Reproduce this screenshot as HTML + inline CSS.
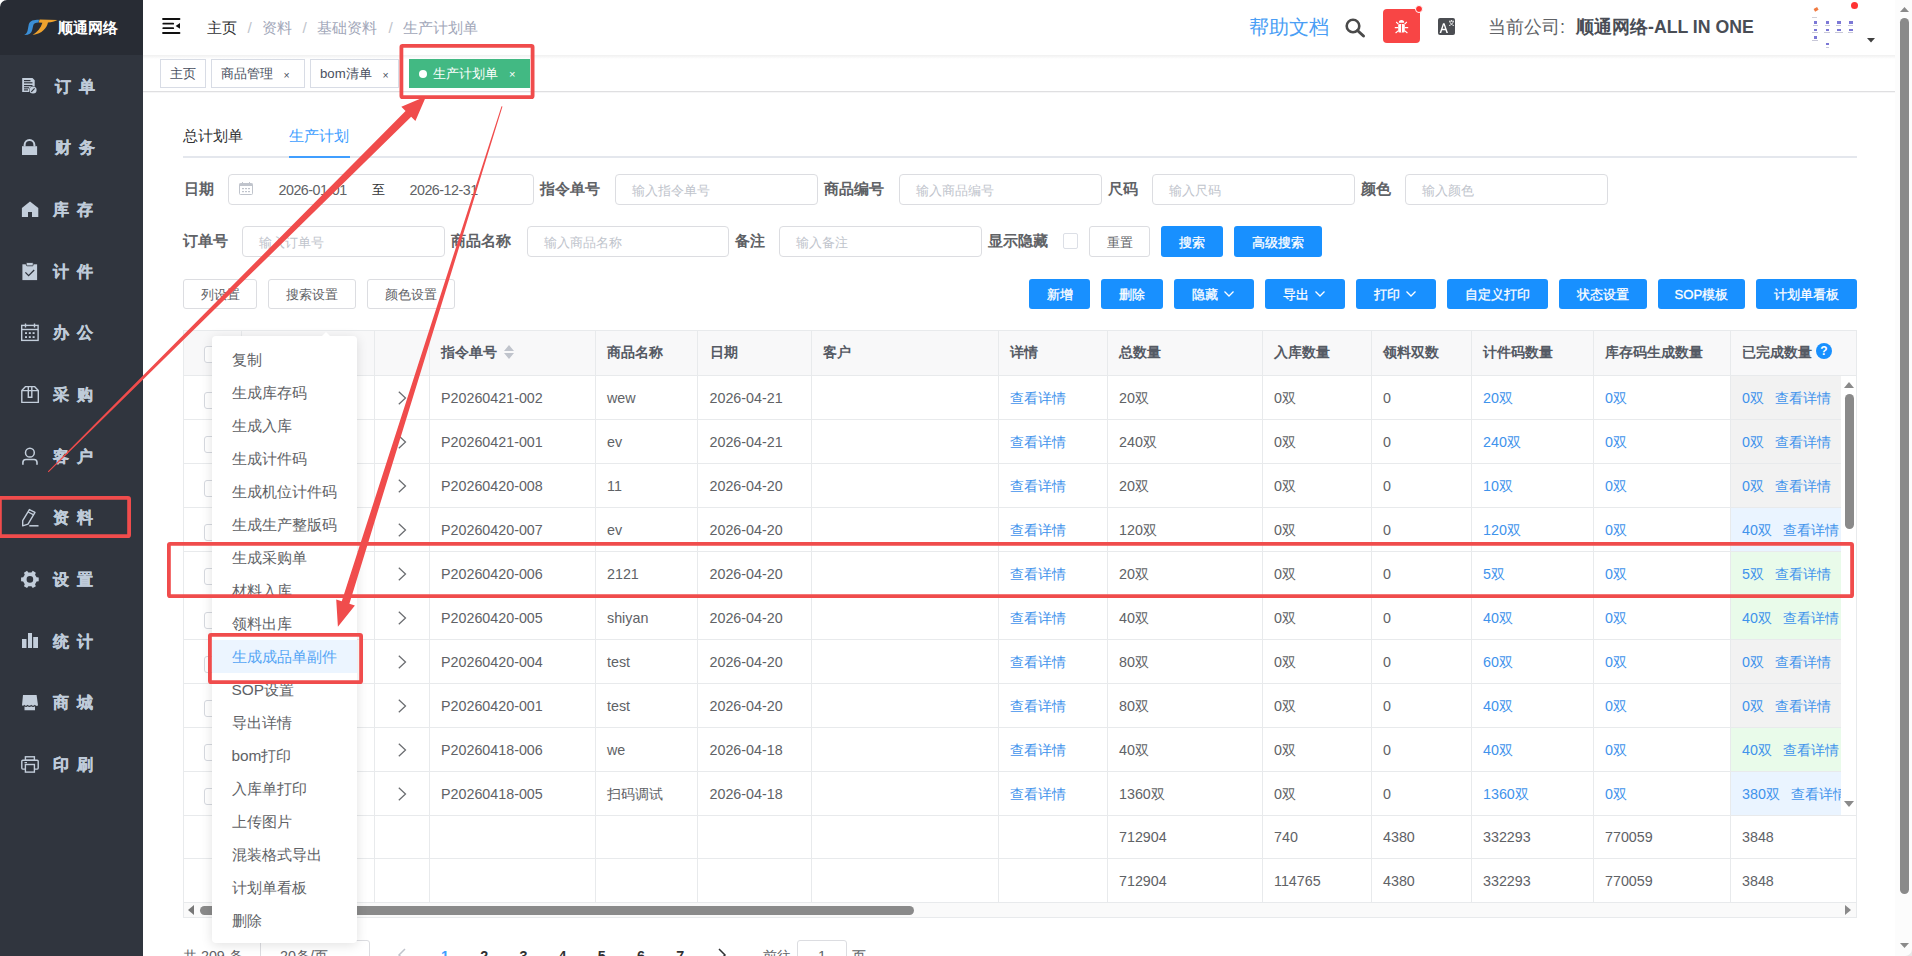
<!DOCTYPE html><html><head><meta charset="utf-8"><style>
*{margin:0;padding:0;box-sizing:border-box}
html,body{width:1912px;height:956px;overflow:hidden;background:#fff}
body{position:relative;font-family:"Liberation Sans",sans-serif;}
.t{position:absolute;white-space:nowrap}
.b{position:absolute}
svg{position:absolute;overflow:visible}
</style></head><body>
<div class="b" style="left:0px;top:0px;width:143px;height:956px;background:#30353e"></div>
<div class="b" style="left:0px;top:0px;width:143px;height:55px;background:#282c34"></div>
<svg style="left:0;top:0" width="143" height="55" viewBox="0 0 143 55">
<path d="M39 19.8 C33.5 19.8 30 20.5 28.8 24.2 L27.6 30.5 C27.1 32.8 26 34 24.2 35 C28.6 35.2 31.4 33.6 32.2 30 L33.3 25.2 C33.8 23.2 35.5 22.6 38.6 22.4 Z" fill="#3b8fd6"/>
<path d="M39.6 19.6 L57.5 20 C54.5 21.4 51.5 22.1 48 22.6 C46.5 28.5 42.5 33.5 32.6 35 C37.5 32 40.8 28 42.4 22.8 L38.7 22.5 Z" fill="#eea22e"/>
</svg>
<div class="t" style="left:58.3px;top:15.6px;font-size:15.3px;line-height:24px;color:#ffffff;font-weight:bold;">顺通网络</div>
<svg style="left:0;top:0" width="143" height="956" viewBox="0 0 143 956">
<path d="M22.2 78 H32.5 L34.7 80.2 V86.5 A4.3 4.3 0 0 0 29 91.9 H22.2 Z" fill="#c3cedb"/>
 <g fill="#30353e"><rect x="24" y="80" width="6.5" height="1.2"/><rect x="24" y="82.2" width="8.5" height="1.2"/><rect x="24" y="85" width="8.5" height="1.2"/><rect x="24" y="87.2" width="5" height="1.2"/><rect x="24" y="89.3" width="4" height="1.2"/></g>
 <circle cx="33" cy="90" r="3.6" fill="#c3cedb"/><path d="M31.3 91.8 L34.6 88.4" stroke="#30353e" stroke-width="1.2"/>
<rect x="22" y="146.2" width="15.1" height="8.8" fill="#c3cedb"/>
 <path d="M24.6 146.5 V145 A4.9 4.9 0 0 1 34.4 145 V146.5" fill="none" stroke="#c3cedb" stroke-width="2"/>
<path d="M21.9 208 L30 201.6 L38.3 208 V216.9 H32 V212 H28 V216.9 H21.9 Z" fill="#c3cedb"/>
<rect x="22.4" y="264.3" width="14.7" height="15.8" fill="#c3cedb"/>
 <rect x="26.3" y="262.5" width="6.9" height="3.3" rx="0.8" fill="#c3cedb" stroke="#30353e" stroke-width="0.8"/>
 <path d="M25.4 272.4 L28.6 275.6 L34.2 270" fill="none" stroke="#30353e" stroke-width="1.3"/>
<rect x="21.7" y="325.4" width="16.4" height="15" fill="none" stroke="#c3cedb" stroke-width="1.4"/>
 <path d="M21.7 329.5 H38.1" stroke="#c3cedb" stroke-width="1.4"/>
 <path d="M25.5 323.5 V327.5 M34.5 323.5 V327.5" stroke="#c3cedb" stroke-width="1.4"/>
 <g fill="#c3cedb"><rect x="25" y="332.2" width="2" height="1.8"/><rect x="28.8" y="332.2" width="2" height="1.8"/><rect x="32.6" y="332.2" width="2" height="1.8"/>
 <rect x="25" y="336.2" width="2" height="1.8"/><rect x="28.8" y="336.2" width="2" height="1.8"/><rect x="32.6" y="336.2" width="2" height="1.8"/></g>
<path d="M21.8 390.5 L25.6 386.6 H34.5 L38.3 390.5 V402.4 H21.8 Z M21.8 390.6 H38.3" fill="none" stroke="#c3cedb" stroke-width="1.4" stroke-linejoin="round"/>
 <path d="M28.3 386.6 V397.3 H31.8 V386.6" fill="none" stroke="#c3cedb" stroke-width="1.4"/>
<circle cx="29.9" cy="452.7" r="4.4" fill="none" stroke="#c3cedb" stroke-width="1.5"/>
 <path d="M22.9 464.8 V462.5 A3 3 0 0 1 25.9 459.5 H34 A3 3 0 0 1 37 462.5 V464.8" fill="none" stroke="#c3cedb" stroke-width="1.6"/>
<path d="M29.4 509.6 L35 512.4 L28 524.2 L22.7 525.8 L22.7 520.6 Z" fill="none" stroke="#c3cedb" stroke-width="1.4" stroke-linejoin="round"/>
 <path d="M28.2 512 L33.7 514.8" stroke="#c3cedb" stroke-width="1.3"/>
 <path d="M29.3 525.8 H38.5" stroke="#c3cedb" stroke-width="1.5"/>
<path d="M36.59 577.33 L38.72 577.61 L38.72 581.19 L36.59 581.47 L35.04 584.16 L35.86 586.14 L32.76 587.93 L31.45 586.23 L28.35 586.23 L27.04 587.93 L23.94 586.14 L24.76 584.16 L23.21 581.47 L21.08 581.19 L21.08 577.61 L23.21 577.33 L24.76 574.64 L23.94 572.66 L27.04 570.87 L28.35 572.57 L31.45 572.57 L32.76 570.87 L35.86 572.66 L35.04 574.64 Z M33.199999999999996 579.4 A3.3 3.3 0 1 0 26.599999999999998 579.4 A3.3 3.3 0 1 0 33.199999999999996 579.4 Z" fill="#c3cedb" fill-rule="evenodd"/>
<rect x="22" y="639" width="4.5" height="9" fill="#c3cedb"/><rect x="28" y="633" width="4" height="15" fill="#c3cedb"/><rect x="33.2" y="637" width="4.8" height="11" fill="#c3cedb"/>
<path d="M23 695 H36.6 L38 705.3 C37 706.8 35.5 705.5 34.8 704.8 C34 706 32 706 31.2 704.8 C30.4 706 28.4 706 27.6 704.8 C26.8 706 25 706 24.3 704.8 C23.5 706 22.4 705.8 22 705.3 Z" fill="#c3cedb"/>
 <path d="M24.5 706.5 C25.5 707.2 27 707.2 27.6 706.3 C28.5 707.2 30.5 707.2 31.2 706.3 C32 707.2 34 707.2 35 706.3 V710.2 H24.5 Z" fill="#c3cedb"/>
<rect x="21.8" y="760.3" width="16.4" height="8.8" rx="1" fill="none" stroke="#c3cedb" stroke-width="1.4"/>
 <rect x="25.4" y="756.8" width="9" height="3.5" fill="none" stroke="#c3cedb" stroke-width="1.4"/>
 <rect x="25.4" y="764.5" width="9" height="7.6" fill="#30353e" stroke="#c3cedb" stroke-width="1.4"/>
 <rect x="24.5" y="762" width="2.5" height="1.2" fill="#c3cedb"/>
</svg>
<div class="t" style="left:54.8px;top:73.8px;font-size:16px;line-height:25px;color:#bfcbd9;font-weight:bold;-webkit-text-stroke:0.3px #bfcbd9">订</div>
<div class="t" style="left:79.1px;top:73.8px;font-size:16px;line-height:25px;color:#bfcbd9;font-weight:bold;-webkit-text-stroke:0.3px #bfcbd9">单</div>
<div class="t" style="left:54.8px;top:135.4px;font-size:16px;line-height:25px;color:#bfcbd9;font-weight:bold;-webkit-text-stroke:0.3px #bfcbd9">财</div>
<div class="t" style="left:79.1px;top:135.4px;font-size:16px;line-height:25px;color:#bfcbd9;font-weight:bold;-webkit-text-stroke:0.3px #bfcbd9">务</div>
<div class="t" style="left:52.8px;top:197.1px;font-size:16px;line-height:25px;color:#bfcbd9;font-weight:bold;-webkit-text-stroke:0.3px #bfcbd9">库</div>
<div class="t" style="left:77.1px;top:197.1px;font-size:16px;line-height:25px;color:#bfcbd9;font-weight:bold;-webkit-text-stroke:0.3px #bfcbd9">存</div>
<div class="t" style="left:52.8px;top:258.8px;font-size:16px;line-height:25px;color:#bfcbd9;font-weight:bold;-webkit-text-stroke:0.3px #bfcbd9">计</div>
<div class="t" style="left:77.1px;top:258.8px;font-size:16px;line-height:25px;color:#bfcbd9;font-weight:bold;-webkit-text-stroke:0.3px #bfcbd9">件</div>
<div class="t" style="left:52.8px;top:320.4px;font-size:16px;line-height:25px;color:#bfcbd9;font-weight:bold;-webkit-text-stroke:0.3px #bfcbd9">办</div>
<div class="t" style="left:77.1px;top:320.4px;font-size:16px;line-height:25px;color:#bfcbd9;font-weight:bold;-webkit-text-stroke:0.3px #bfcbd9">公</div>
<div class="t" style="left:52.8px;top:382.1px;font-size:16px;line-height:25px;color:#bfcbd9;font-weight:bold;-webkit-text-stroke:0.3px #bfcbd9">采</div>
<div class="t" style="left:77.1px;top:382.1px;font-size:16px;line-height:25px;color:#bfcbd9;font-weight:bold;-webkit-text-stroke:0.3px #bfcbd9">购</div>
<div class="t" style="left:52.8px;top:443.7px;font-size:16px;line-height:25px;color:#bfcbd9;font-weight:bold;-webkit-text-stroke:0.3px #bfcbd9">客</div>
<div class="t" style="left:77.1px;top:443.7px;font-size:16px;line-height:25px;color:#bfcbd9;font-weight:bold;-webkit-text-stroke:0.3px #bfcbd9">户</div>
<div class="t" style="left:52.8px;top:505.4px;font-size:16px;line-height:25px;color:#bfcbd9;font-weight:bold;-webkit-text-stroke:0.3px #bfcbd9">资</div>
<div class="t" style="left:77.1px;top:505.4px;font-size:16px;line-height:25px;color:#bfcbd9;font-weight:bold;-webkit-text-stroke:0.3px #bfcbd9">料</div>
<div class="t" style="left:52.8px;top:567.0px;font-size:16px;line-height:25px;color:#bfcbd9;font-weight:bold;-webkit-text-stroke:0.3px #bfcbd9">设</div>
<div class="t" style="left:77.1px;top:567.0px;font-size:16px;line-height:25px;color:#bfcbd9;font-weight:bold;-webkit-text-stroke:0.3px #bfcbd9">置</div>
<div class="t" style="left:52.8px;top:628.6px;font-size:16px;line-height:25px;color:#bfcbd9;font-weight:bold;-webkit-text-stroke:0.3px #bfcbd9">统</div>
<div class="t" style="left:77.1px;top:628.6px;font-size:16px;line-height:25px;color:#bfcbd9;font-weight:bold;-webkit-text-stroke:0.3px #bfcbd9">计</div>
<div class="t" style="left:52.8px;top:690.3px;font-size:16px;line-height:25px;color:#bfcbd9;font-weight:bold;-webkit-text-stroke:0.3px #bfcbd9">商</div>
<div class="t" style="left:77.1px;top:690.3px;font-size:16px;line-height:25px;color:#bfcbd9;font-weight:bold;-webkit-text-stroke:0.3px #bfcbd9">城</div>
<div class="t" style="left:52.8px;top:751.9px;font-size:16px;line-height:25px;color:#bfcbd9;font-weight:bold;-webkit-text-stroke:0.3px #bfcbd9">印</div>
<div class="t" style="left:77.1px;top:751.9px;font-size:16px;line-height:25px;color:#bfcbd9;font-weight:bold;-webkit-text-stroke:0.3px #bfcbd9">刷</div>
<div class="b" style="left:143px;top:54.5px;width:1752px;height:4.5px;background:linear-gradient(#f0f0f0,#f6f6f6 40%,#fff)"></div>
<svg style="left:0;top:0" width="200" height="50" viewBox="0 0 200 50">
<g stroke="#111" stroke-width="1.8" stroke-linecap="round">
<path d="M163 19 H179.5"/><path d="M163.3 23.7 H173.2"/><path d="M163.3 28.2 H173.2"/><path d="M163 33 H179.5"/>
</g>
<path d="M180 23 L175.6 25.9 L180 28.8 Z" fill="#111"/>
</svg>
<div class="t" style="left:207px;top:15.5px;font-size:15.4px;line-height:24px;color:#303133;font-weight:normal;">主页</div>
<div class="t" style="left:247.5px;top:15.5px;font-size:15.4px;line-height:24px;color:#c0c4cc;font-weight:normal;">/</div>
<div class="t" style="left:262px;top:15.5px;font-size:15.4px;line-height:24px;color:#a2a7b9;font-weight:normal;">资料</div>
<div class="t" style="left:302.5px;top:15.5px;font-size:15.4px;line-height:24px;color:#c0c4cc;font-weight:normal;">/</div>
<div class="t" style="left:317px;top:15.5px;font-size:15.4px;line-height:24px;color:#a2a7b9;font-weight:normal;">基础资料</div>
<div class="t" style="left:388.5px;top:15.5px;font-size:15.4px;line-height:24px;color:#c0c4cc;font-weight:normal;">/</div>
<div class="t" style="left:403px;top:15.5px;font-size:15.4px;line-height:24px;color:#a2a7b9;font-weight:normal;">生产计划单</div>
<div class="t" style="left:1249px;top:11.5px;font-size:19.5px;line-height:31px;color:#4a9ef5;font-weight:normal;">帮助文档</div>
<svg style="left:1345px;top:18px" width="20" height="19" viewBox="0 0 20 19">
<circle cx="8" cy="8" r="6.3" fill="none" stroke="#4a4a4a" stroke-width="2.6"/>
<path d="M12.5 12.5 L18.5 18" stroke="#4a4a4a" stroke-width="3" stroke-linecap="round"/>
</svg>
<div class="b" style="left:1383px;top:9px;width:37px;height:34px;background:#f84545;border-radius:4px"></div>
<svg style="left:1394px;top:19px" width="15" height="15" viewBox="0 0 15 15">
<path d="M4.8 3.8 A2.7 2.7 0 0 1 10.2 3.8 Z" fill="#fff"/>
<rect x="4.2" y="5" width="6.6" height="8.6" rx="1.5" fill="#fff"/>
<path d="M7.5 5.2 V13.6" stroke="#f84545" stroke-width="0.9"/>
<path d="M2.2 3 L4.6 5.4 M12.8 3 L10.4 5.4 M0.8 8.6 H4.3 M14.2 8.6 H10.7 M1.6 14 L4.4 11.6 M13.4 14 L10.6 11.6" stroke="#fff" stroke-width="1.1"/>
</svg>
<div class="b" style="left:1415px;top:5.3px;width:8px;height:8px;border-radius:50%;background:#f33;border:1px solid #fff"></div>
<div class="b" style="left:1438px;top:18px;width:17px;height:17px;background:#4b4d52;border-radius:2px"></div>
<svg style="left:1438px;top:18px" width="17" height="17" viewBox="0 0 17 17">
<path d="M1.6 15 L5 5.2 H6.6 L10 15 H8.4 L7.5 12.3 H4.1 L3.2 15 Z M4.6 10.8 H7 L5.8 7 Z" fill="#fff"/>
<path d="M11 3.2 H16 M13.5 2 V3.2 M11.6 3.4 C12.3 5.5 13.8 7 16 7.6 M15.4 3.4 C14.8 5.5 13.2 7 11 7.6" fill="none" stroke="#fff" stroke-width="0.8"/>
</svg>
<div class="t" style="left:1488px;top:12.5px;font-size:18px;line-height:28px;color:#606266;font-weight:normal;">当前公司:</div>
<div class="t" style="left:1576px;top:12.5px;font-size:17.7px;line-height:28px;color:#494d55;font-weight:bold;">顺通网络-ALL IN ONE</div>
<div class="b" style="left:1813.5px;top:21px;width:3.5px;height:3px;background:#6560cf;opacity:0.85"></div>
<div class="b" style="left:1825.5px;top:21px;width:3.5px;height:3px;background:#6560cf;opacity:0.85"></div>
<div class="b" style="left:1837px;top:21px;width:3.5px;height:3px;background:#6560cf;opacity:0.85"></div>
<div class="b" style="left:1849px;top:21px;width:3.5px;height:3px;background:#6560cf;opacity:0.85"></div>
<div class="b" style="left:1813.5px;top:28.5px;width:3.5px;height:2.5px;background:#6560cf;opacity:0.85"></div>
<div class="b" style="left:1825.5px;top:28.5px;width:3.5px;height:2.5px;background:#6560cf;opacity:0.85"></div>
<div class="b" style="left:1837px;top:28.5px;width:3.5px;height:2.5px;background:#6560cf;opacity:0.85"></div>
<div class="b" style="left:1849px;top:28.5px;width:3.5px;height:2.5px;background:#6560cf;opacity:0.85"></div>
<div class="b" style="left:1813.5px;top:36px;width:3.5px;height:3px;background:#6560cf;opacity:0.85"></div>
<div class="b" style="left:1825.7px;top:43px;width:3.0px;height:2px;background:#6560cf;opacity:0.85"></div>
<div class="b" style="left:1812.5px;top:25px;width:5.0px;height:0.8000000000000007px;background:#c8c8d8"></div>
<div class="b" style="left:1824.5px;top:25px;width:5.0px;height:0.8000000000000007px;background:#c8c8d8"></div>
<div class="b" style="left:1836px;top:25px;width:5px;height:0.8000000000000007px;background:#c8c8d8"></div>
<div class="b" style="left:1848px;top:25px;width:5px;height:0.8000000000000007px;background:#c8c8d8"></div>
<div class="b" style="left:1812px;top:32px;width:6px;height:0.7999999999999972px;background:#c8c8d8"></div>
<div class="b" style="left:1824px;top:32px;width:6px;height:0.7999999999999972px;background:#c8c8d8"></div>
<div class="b" style="left:1835px;top:32px;width:8px;height:0.7999999999999972px;background:#c8c8d8"></div>
<div class="b" style="left:1848px;top:32px;width:5px;height:0.7999999999999972px;background:#c8c8d8"></div>
<div class="b" style="left:1812px;top:39.5px;width:6px;height:0.7999999999999972px;background:#c8c8d8"></div>
<div class="b" style="left:1825.5px;top:46.5px;width:3.0px;height:0.7999999999999972px;background:#c8c8d8"></div>
<div class="b" style="left:1814px;top:8px;width:3.5px;height:2.5px;background:#f07a40;transform:rotate(-30deg)"></div>
<div class="b" style="left:1811.5px;top:17px;width:5.5px;height:1px;background:#d0d0d8"></div>
<div class="b" style="left:1850.8px;top:1.8px;width:7px;height:7px;border-radius:50%;background:#f33"></div>
<svg style="left:1866.5px;top:37.5px" width="8" height="4.5" viewBox="0 0 8 4.5"><path d="M0 0 H8 L4 4.5 Z" fill="#404040"/></svg>
<div class="b" style="left:1895px;top:0px;width:17px;height:956px;background:#fcfcfc"></div>
<div class="b" style="left:1900px;top:18px;width:9px;height:876px;background:#8a8a8a;border-radius:5px"></div>
<svg style="left:1900px;top:7px" width="9" height="5" viewBox="0 0 9 5"><path d="M0 5 H9 L4.5 0 Z" fill="#8a8a8a"/></svg>
<svg style="left:1900px;top:943px" width="9" height="5" viewBox="0 0 9 5"><path d="M0 0 H9 L4.5 5 Z" fill="#8a8a8a"/></svg>
<div class="b" style="left:143px;top:91px;width:1752px;height:1px;background:#dfdfe1"></div>
<div class="b" style="left:143px;top:92px;width:1752px;height:1px;background:#f6f6f7"></div>
<div class="b" style="left:160px;top:59px;width:46px;height:29px;border:1px solid #d8dce5;background:#fff"></div>
<div class="t" style="left:170px;top:63.0px;font-size:13.2px;line-height:21px;color:#495060;font-weight:normal;">主页</div>
<div class="b" style="left:211px;top:59px;width:94px;height:29px;border:1px solid #d8dce5;background:#fff"></div>
<div class="t" style="left:221px;top:63.0px;font-size:13.2px;line-height:21px;color:#495060;font-weight:normal;">商品管理</div>
<div class="t" style="left:283.5px;top:66.5px;font-size:10.5px;line-height:16px;color:#495060;font-weight:normal;">×</div>
<div class="b" style="left:310px;top:59px;width:89px;height:29px;border:1px solid #d8dce5;background:#fff"></div>
<div class="t" style="left:320px;top:63.0px;font-size:13.2px;line-height:21px;color:#495060;font-weight:normal;">bom清单</div>
<div class="t" style="left:382.5px;top:66.5px;font-size:10.5px;line-height:16px;color:#495060;font-weight:normal;">×</div>
<div class="b" style="left:409px;top:59px;width:121px;height:29px;background:#42b983"></div>
<div class="b" style="left:419px;top:70px;width:8px;height:8px;border-radius:50%;background:#fff"></div>
<div class="t" style="left:433px;top:63.0px;font-size:13.2px;line-height:21px;color:#fff;font-weight:normal;">生产计划单</div>
<div class="t" style="left:509px;top:66.0px;font-size:11px;line-height:17px;color:#fff;font-weight:normal;">×</div>
<div class="t" style="left:183px;top:123.5px;font-size:15.4px;line-height:24px;color:#303133;font-weight:normal;">总计划单</div>
<div class="t" style="left:289px;top:123.5px;font-size:15.4px;line-height:24px;color:#409eff;font-weight:normal;">生产计划</div>
<div class="b" style="left:183px;top:156px;width:1674px;height:2px;background:#e4e7ed"></div>
<div class="b" style="left:289px;top:156px;width:61px;height:2px;background:#409eff"></div>
<div class="t" style="left:183.5px;top:176.5px;font-size:15.4px;line-height:24px;color:#606266;font-weight:bold;">日期</div>
<div class="b" style="left:228px;top:174px;width:306px;height:31px;border:1px solid #dcdde1;border-radius:4px;background:#fff"></div>
<svg style="left:239px;top:182px" width="14" height="13" viewBox="0 0 14 13">
<rect x="0.5" y="1.5" width="13" height="11" rx="1" fill="none" stroke="#c0c4cc" stroke-width="1"/>
<rect x="0.5" y="1.5" width="13" height="2.5" fill="#c0c4cc"/>
<rect x="3" y="0" width="1" height="2" fill="#c0c4cc"/><rect x="10" y="0" width="1" height="2" fill="#c0c4cc"/>
<g fill="#c0c4cc"><rect x="3" y="6" width="2" height="1.2"/><rect x="6" y="6" width="2" height="1.2"/><rect x="9" y="6" width="2" height="1.2"/>
<rect x="3" y="9" width="2" height="1.2"/><rect x="6" y="9" width="2" height="1.2"/><rect x="9" y="9" width="2" height="1.2"/></g>
</svg>
<div class="t" style="left:278.5px;top:179.0px;font-size:14.3px;line-height:22px;color:#606266;font-weight:normal;letter-spacing:-0.5px">2026-01-01</div>
<div class="t" style="left:371.5px;top:178.5px;font-size:13.2px;line-height:21px;color:#303133;font-weight:normal;">至</div>
<div class="t" style="left:409.5px;top:179.0px;font-size:14.3px;line-height:22px;color:#606266;font-weight:normal;letter-spacing:-0.5px">2026-12-31</div>
<div class="t" style="left:540px;top:176.5px;font-size:15.4px;line-height:24px;color:#606266;font-weight:bold;">指令单号</div>
<div class="b" style="left:615px;top:174px;width:203px;height:31px;border:1px solid #dcdde1;border-radius:4px;background:#fff"></div>
<div class="t" style="left:632px;top:179.5px;font-size:13.2px;line-height:21px;color:#c0c4cc;font-weight:normal;">输入指令单号</div>
<div class="t" style="left:824px;top:176.5px;font-size:15.4px;line-height:24px;color:#606266;font-weight:bold;">商品编号</div>
<div class="b" style="left:899px;top:174px;width:203px;height:31px;border:1px solid #dcdde1;border-radius:4px;background:#fff"></div>
<div class="t" style="left:916px;top:179.5px;font-size:13.2px;line-height:21px;color:#c0c4cc;font-weight:normal;">输入商品编号</div>
<div class="t" style="left:1108px;top:176.5px;font-size:15.4px;line-height:24px;color:#606266;font-weight:bold;">尺码</div>
<div class="b" style="left:1152px;top:174px;width:203px;height:31px;border:1px solid #dcdde1;border-radius:4px;background:#fff"></div>
<div class="t" style="left:1169px;top:179.5px;font-size:13.2px;line-height:21px;color:#c0c4cc;font-weight:normal;">输入尺码</div>
<div class="t" style="left:1361px;top:176.5px;font-size:15.4px;line-height:24px;color:#606266;font-weight:bold;">颜色</div>
<div class="b" style="left:1405px;top:174px;width:203px;height:31px;border:1px solid #dcdde1;border-radius:4px;background:#fff"></div>
<div class="t" style="left:1422px;top:179.5px;font-size:13.2px;line-height:21px;color:#c0c4cc;font-weight:normal;">输入颜色</div>
<div class="t" style="left:183px;top:228.5px;font-size:15.4px;line-height:24px;color:#606266;font-weight:bold;">订单号</div>
<div class="b" style="left:242px;top:226px;width:203px;height:31px;border:1px solid #dcdde1;border-radius:4px;background:#fff"></div>
<div class="t" style="left:259px;top:231.5px;font-size:13.2px;line-height:21px;color:#c0c4cc;font-weight:normal;">输入订单号</div>
<div class="t" style="left:451px;top:228.5px;font-size:15.4px;line-height:24px;color:#606266;font-weight:bold;">商品名称</div>
<div class="b" style="left:527px;top:226px;width:202px;height:31px;border:1px solid #dcdde1;border-radius:4px;background:#fff"></div>
<div class="t" style="left:544px;top:231.5px;font-size:13.2px;line-height:21px;color:#c0c4cc;font-weight:normal;">输入商品名称</div>
<div class="t" style="left:735px;top:228.5px;font-size:15.4px;line-height:24px;color:#606266;font-weight:bold;">备注</div>
<div class="b" style="left:779px;top:226px;width:203px;height:31px;border:1px solid #dcdde1;border-radius:4px;background:#fff"></div>
<div class="t" style="left:796px;top:231.5px;font-size:13.2px;line-height:21px;color:#c0c4cc;font-weight:normal;">输入备注</div>
<div class="t" style="left:988px;top:228.5px;font-size:15.4px;line-height:24px;color:#606266;font-weight:bold;">显示隐藏</div>
<div class="b" style="left:1063px;top:233px;width:15px;height:16px;border:1px solid #dcdfe6;border-radius:2px;background:#fff"></div>
<div class="b" style="left:1089px;top:226px;width:61px;height:31px;border:1px solid #dcdde1;border-radius:3px;background:#fff"></div>
<div class="t" style="left:1089px;top:226.8px;width:61px;height:31px;line-height:31px;text-align:center;font-size:13.2px;color:#606266;">重置</div>
<div class="b" style="left:1161px;top:226px;width:62px;height:31px;background:#1890ff;border-radius:3px"></div>
<div class="t" style="left:1161px;top:226.8px;width:62px;height:31px;line-height:31px;text-align:center;font-size:13.2px;color:#fff;-webkit-text-stroke:0.3px #fff">搜索</div>
<div class="b" style="left:1234px;top:226px;width:88px;height:31px;background:#1890ff;border-radius:3px"></div>
<div class="t" style="left:1234px;top:226.8px;width:88px;height:31px;line-height:31px;text-align:center;font-size:13.2px;color:#fff;-webkit-text-stroke:0.3px #fff">高级搜索</div>
<div class="b" style="left:183px;top:279px;width:74px;height:30px;border:1px solid #dcdde1;border-radius:3px;background:#fff"></div>
<div class="t" style="left:183px;top:279.8px;width:74px;height:30px;line-height:30px;text-align:center;font-size:13.2px;color:#606266;">列设置</div>
<div class="b" style="left:268px;top:279px;width:88px;height:30px;border:1px solid #dcdde1;border-radius:3px;background:#fff"></div>
<div class="t" style="left:268px;top:279.8px;width:88px;height:30px;line-height:30px;text-align:center;font-size:13.2px;color:#606266;">搜索设置</div>
<div class="b" style="left:367px;top:279px;width:88px;height:30px;border:1px solid #dcdde1;border-radius:3px;background:#fff"></div>
<div class="t" style="left:367px;top:279.8px;width:88px;height:30px;line-height:30px;text-align:center;font-size:13.2px;color:#606266;">颜色设置</div>
<div class="b" style="left:1029px;top:279px;width:61px;height:30px;background:#1890ff;border-radius:3px"></div>
<div class="t" style="left:1029px;top:279.8px;width:61px;height:30px;line-height:30px;text-align:center;font-size:13.2px;color:#fff;-webkit-text-stroke:0.3px #fff">新增</div>
<div class="b" style="left:1101px;top:279px;width:62px;height:30px;background:#1890ff;border-radius:3px"></div>
<div class="t" style="left:1101px;top:279.8px;width:62px;height:30px;line-height:30px;text-align:center;font-size:13.2px;color:#fff;-webkit-text-stroke:0.3px #fff">删除</div>
<div class="b" style="left:1174px;top:279px;width:80px;height:30px;background:#1890ff;border-radius:3px"></div>
<div class="t" style="left:1174px;top:279.8px;width:80px;height:30px;line-height:30px;text-align:center;font-size:13.2px;color:#fff;-webkit-text-stroke:0.3px #fff">隐藏<span style="display:inline-block;width:18px"></span></div>
<svg style="left:1224px;top:291px" width="10" height="6" viewBox="0 0 10 6"><path d="M0.5 0.5 L5 5 L9.5 0.5" fill="none" stroke="#fff" stroke-width="1.3"/></svg>
<div class="b" style="left:1265px;top:279px;width:80px;height:30px;background:#1890ff;border-radius:3px"></div>
<div class="t" style="left:1265px;top:279.8px;width:80px;height:30px;line-height:30px;text-align:center;font-size:13.2px;color:#fff;-webkit-text-stroke:0.3px #fff">导出<span style="display:inline-block;width:18px"></span></div>
<svg style="left:1315px;top:291px" width="10" height="6" viewBox="0 0 10 6"><path d="M0.5 0.5 L5 5 L9.5 0.5" fill="none" stroke="#fff" stroke-width="1.3"/></svg>
<div class="b" style="left:1356px;top:279px;width:80px;height:30px;background:#1890ff;border-radius:3px"></div>
<div class="t" style="left:1356px;top:279.8px;width:80px;height:30px;line-height:30px;text-align:center;font-size:13.2px;color:#fff;-webkit-text-stroke:0.3px #fff">打印<span style="display:inline-block;width:18px"></span></div>
<svg style="left:1406px;top:291px" width="10" height="6" viewBox="0 0 10 6"><path d="M0.5 0.5 L5 5 L9.5 0.5" fill="none" stroke="#fff" stroke-width="1.3"/></svg>
<div class="b" style="left:1447px;top:279px;width:101px;height:30px;background:#1890ff;border-radius:3px"></div>
<div class="t" style="left:1447px;top:279.8px;width:101px;height:30px;line-height:30px;text-align:center;font-size:13.2px;color:#fff;-webkit-text-stroke:0.3px #fff">自定义打印</div>
<div class="b" style="left:1559px;top:279px;width:88px;height:30px;background:#1890ff;border-radius:3px"></div>
<div class="t" style="left:1559px;top:279.8px;width:88px;height:30px;line-height:30px;text-align:center;font-size:13.2px;color:#fff;-webkit-text-stroke:0.3px #fff">状态设置</div>
<div class="b" style="left:1658px;top:279px;width:87px;height:30px;background:#1890ff;border-radius:3px"></div>
<div class="t" style="left:1658px;top:279.8px;width:87px;height:30px;line-height:30px;text-align:center;font-size:13.2px;color:#fff;-webkit-text-stroke:0.3px #fff">SOP模板</div>
<div class="b" style="left:1756px;top:279px;width:101px;height:30px;background:#1890ff;border-radius:3px"></div>
<div class="t" style="left:1756px;top:279.8px;width:101px;height:30px;line-height:30px;text-align:center;font-size:13.2px;color:#fff;-webkit-text-stroke:0.3px #fff">计划单看板</div>
<div class="b" style="left:183px;top:330px;width:1673px;height:45px;background:#f8f8f9"></div>
<div class="b" style="left:1731px;top:375px;width:110px;height:44px;background:#f2f2f2"></div>
<div class="b" style="left:1731px;top:419px;width:110px;height:44px;background:#f2f2f2"></div>
<div class="b" style="left:1731px;top:463px;width:110px;height:44px;background:#f2f2f2"></div>
<div class="b" style="left:1731px;top:507px;width:110px;height:44px;background:#eaf4ff"></div>
<div class="b" style="left:1731px;top:551px;width:110px;height:44px;background:#e9fbea"></div>
<div class="b" style="left:1731px;top:595px;width:110px;height:44px;background:#e9fbea"></div>
<div class="b" style="left:1731px;top:639px;width:110px;height:44px;background:#f2f2f2"></div>
<div class="b" style="left:1731px;top:683px;width:110px;height:44px;background:#f2f2f2"></div>
<div class="b" style="left:1731px;top:727px;width:110px;height:44px;background:#e9fbea"></div>
<div class="b" style="left:1731px;top:771px;width:110px;height:44px;background:#eaf4ff"></div>
<div class="b" style="left:183px;top:330px;width:1673px;height:1px;background:#e8eaec"></div>
<div class="b" style="left:183px;top:375px;width:1673px;height:1px;background:#e8eaec"></div>
<div class="b" style="left:183px;top:419px;width:1673px;height:1px;background:#e8eaec"></div>
<div class="b" style="left:183px;top:463px;width:1673px;height:1px;background:#e8eaec"></div>
<div class="b" style="left:183px;top:507px;width:1673px;height:1px;background:#e8eaec"></div>
<div class="b" style="left:183px;top:551px;width:1673px;height:1px;background:#e8eaec"></div>
<div class="b" style="left:183px;top:595px;width:1673px;height:1px;background:#e8eaec"></div>
<div class="b" style="left:183px;top:639px;width:1673px;height:1px;background:#e8eaec"></div>
<div class="b" style="left:183px;top:683px;width:1673px;height:1px;background:#e8eaec"></div>
<div class="b" style="left:183px;top:727px;width:1673px;height:1px;background:#e8eaec"></div>
<div class="b" style="left:183px;top:771px;width:1673px;height:1px;background:#e8eaec"></div>
<div class="b" style="left:183px;top:815px;width:1673px;height:1px;background:#e8eaec"></div>
<div class="b" style="left:183px;top:858px;width:1673px;height:1px;background:#e8eaec"></div>
<div class="b" style="left:183px;top:902px;width:1673px;height:1px;background:#e8eaec"></div>
<div class="b" style="left:183px;top:917px;width:1673px;height:1px;background:#e8eaec"></div>
<div class="b" style="left:183px;top:330px;width:1px;height:572px;background:#e8eaec"></div>
<div class="b" style="left:241px;top:330px;width:1px;height:572px;background:#e8eaec"></div>
<div class="b" style="left:374px;top:330px;width:1px;height:572px;background:#e8eaec"></div>
<div class="b" style="left:429px;top:330px;width:1px;height:572px;background:#e8eaec"></div>
<div class="b" style="left:595px;top:330px;width:1px;height:572px;background:#e8eaec"></div>
<div class="b" style="left:697px;top:330px;width:1px;height:572px;background:#e8eaec"></div>
<div class="b" style="left:811px;top:330px;width:1px;height:572px;background:#e8eaec"></div>
<div class="b" style="left:998px;top:330px;width:1px;height:572px;background:#e8eaec"></div>
<div class="b" style="left:1107px;top:330px;width:1px;height:572px;background:#e8eaec"></div>
<div class="b" style="left:1262px;top:330px;width:1px;height:572px;background:#e8eaec"></div>
<div class="b" style="left:1371px;top:330px;width:1px;height:572px;background:#e8eaec"></div>
<div class="b" style="left:1471px;top:330px;width:1px;height:572px;background:#e8eaec"></div>
<div class="b" style="left:1593px;top:330px;width:1px;height:572px;background:#e8eaec"></div>
<div class="b" style="left:1730px;top:330px;width:1px;height:572px;background:#e8eaec"></div>
<div class="b" style="left:1856px;top:330px;width:1px;height:572px;background:#e8eaec"></div>
<div class="b" style="left:183px;top:902px;width:1px;height:16px;background:#e8eaec"></div>
<div class="b" style="left:1856px;top:902px;width:1px;height:16px;background:#e8eaec"></div>
<div class="b" style="left:1841px;top:376px;width:15px;height:439px;background:#fff"></div>
<svg style="left:1844px;top:382px" width="10" height="6" viewBox="0 0 10 6"><path d="M0 6 H10 L5 0 Z" fill="#8a8a8a"/></svg>
<div class="b" style="left:1845px;top:394px;width:9px;height:135px;background:#8a8a8a;border-radius:5px"></div>
<svg style="left:1844px;top:801px" width="10" height="6" viewBox="0 0 10 6"><path d="M0 0 H10 L5 6 Z" fill="#8a8a8a"/></svg>
<div class="b" style="left:184px;top:903px;width:1672px;height:14px;background:#fafafa"></div>
<svg style="left:188px;top:905px" width="6" height="10" viewBox="0 0 6 10"><path d="M6 0 V10 L0 5 Z" fill="#777"/></svg>
<div class="b" style="left:200px;top:906px;width:714px;height:9px;background:#8a8a8a;border-radius:5px"></div>
<svg style="left:1845px;top:905px" width="6" height="10" viewBox="0 0 6 10"><path d="M0 0 V10 L6 5 Z" fill="#8a8a8a"/></svg>
<div class="t" style="left:441px;top:340.6px;font-size:14.3px;line-height:22px;color:#555a64;font-weight:bold;">指令单号</div>
<div class="t" style="left:607px;top:340.6px;font-size:14.3px;line-height:22px;color:#555a64;font-weight:bold;">商品名称</div>
<div class="t" style="left:709.5px;top:340.6px;font-size:14.3px;line-height:22px;color:#555a64;font-weight:bold;">日期</div>
<div class="t" style="left:823px;top:340.6px;font-size:14.3px;line-height:22px;color:#555a64;font-weight:bold;">客户</div>
<div class="t" style="left:1010px;top:340.6px;font-size:14.3px;line-height:22px;color:#555a64;font-weight:bold;">详情</div>
<div class="t" style="left:1119px;top:340.6px;font-size:14.3px;line-height:22px;color:#555a64;font-weight:bold;">总数量</div>
<div class="t" style="left:1274px;top:340.6px;font-size:14.3px;line-height:22px;color:#555a64;font-weight:bold;">入库数量</div>
<div class="t" style="left:1383px;top:340.6px;font-size:14.3px;line-height:22px;color:#555a64;font-weight:bold;">领料双数</div>
<div class="t" style="left:1483px;top:340.6px;font-size:14.3px;line-height:22px;color:#555a64;font-weight:bold;">计件码数量</div>
<div class="t" style="left:1605px;top:340.6px;font-size:14.3px;line-height:22px;color:#555a64;font-weight:bold;">库存码生成数量</div>
<div class="t" style="left:1742px;top:340.6px;font-size:14.3px;line-height:22px;color:#555a64;font-weight:bold;">已完成数量</div>
<svg style="left:504px;top:345px" width="10" height="14" viewBox="0 0 10 14"><path d="M0 6 L5 0 L10 6 Z M0 8 L5 14 L10 8 Z" fill="#c0c4cc"/></svg>
<div class="b" style="left:1816px;top:343px;width:16px;height:16px;border-radius:50%;background:#1890ff;color:#fff;font-size:12px;line-height:16px;text-align:center;font-weight:bold">?</div>
<div class="b" style="left:203.5px;top:346px;width:17.0px;height:17px;border:1.3px solid #d6d9df;border-radius:3px;background:#fff"></div>
<div class="b" style="left:203.5px;top:391.5px;width:17.0px;height:17.0px;border:1.3px solid #d6d9df;border-radius:3px;background:#fff"></div>
<svg style="left:398px;top:391.0px" width="9" height="14" viewBox="0 0 9 14"><path d="M0.8 0.8 L7.5 7 L0.8 13.2" fill="none" stroke="#6a6c70" stroke-width="1.25"/></svg>
<div class="t" style="left:441px;top:386.5px;font-size:14.3px;line-height:22px;color:#606266;font-weight:normal;">P20260421-002</div>
<div class="t" style="left:607px;top:386.5px;font-size:14.3px;line-height:22px;color:#606266;font-weight:normal;">wew</div>
<div class="t" style="left:709.5px;top:386.5px;font-size:14.3px;line-height:22px;color:#606266;font-weight:normal;">2026-04-21</div>
<div class="t" style="left:1010px;top:386.5px;font-size:14.3px;line-height:22px;color:#3f93ec;font-weight:normal;">查看详情</div>
<div class="t" style="left:1119px;top:386.5px;font-size:14.3px;line-height:22px;color:#606266;font-weight:normal;">20双</div>
<div class="t" style="left:1274px;top:386.5px;font-size:14.3px;line-height:22px;color:#606266;font-weight:normal;">0双</div>
<div class="t" style="left:1383px;top:386.5px;font-size:14.3px;line-height:22px;color:#606266;font-weight:normal;">0</div>
<div class="t" style="left:1483px;top:386.5px;font-size:14.3px;line-height:22px;color:#3f93ec;font-weight:normal;">20双</div>
<div class="t" style="left:1605px;top:386.5px;font-size:14.3px;line-height:22px;color:#3f93ec;font-weight:normal;">0双</div>
<div class="t" style="left:1742px;top:386.5px;width:99px;overflow:hidden;font-size:14.3px;line-height:22px;color:#3f93ec">0双<span style="margin-left:11.5px">查看详情</span></div>
<div class="b" style="left:203.5px;top:435.5px;width:17.0px;height:17.0px;border:1.3px solid #d6d9df;border-radius:3px;background:#fff"></div>
<svg style="left:398px;top:435.0px" width="9" height="14" viewBox="0 0 9 14"><path d="M0.8 0.8 L7.5 7 L0.8 13.2" fill="none" stroke="#6a6c70" stroke-width="1.25"/></svg>
<div class="t" style="left:441px;top:430.5px;font-size:14.3px;line-height:22px;color:#606266;font-weight:normal;">P20260421-001</div>
<div class="t" style="left:607px;top:430.5px;font-size:14.3px;line-height:22px;color:#606266;font-weight:normal;">ev</div>
<div class="t" style="left:709.5px;top:430.5px;font-size:14.3px;line-height:22px;color:#606266;font-weight:normal;">2026-04-21</div>
<div class="t" style="left:1010px;top:430.5px;font-size:14.3px;line-height:22px;color:#3f93ec;font-weight:normal;">查看详情</div>
<div class="t" style="left:1119px;top:430.5px;font-size:14.3px;line-height:22px;color:#606266;font-weight:normal;">240双</div>
<div class="t" style="left:1274px;top:430.5px;font-size:14.3px;line-height:22px;color:#606266;font-weight:normal;">0双</div>
<div class="t" style="left:1383px;top:430.5px;font-size:14.3px;line-height:22px;color:#606266;font-weight:normal;">0</div>
<div class="t" style="left:1483px;top:430.5px;font-size:14.3px;line-height:22px;color:#3f93ec;font-weight:normal;">240双</div>
<div class="t" style="left:1605px;top:430.5px;font-size:14.3px;line-height:22px;color:#3f93ec;font-weight:normal;">0双</div>
<div class="t" style="left:1742px;top:430.5px;width:99px;overflow:hidden;font-size:14.3px;line-height:22px;color:#3f93ec">0双<span style="margin-left:11.5px">查看详情</span></div>
<div class="b" style="left:203.5px;top:479.5px;width:17.0px;height:17.0px;border:1.3px solid #d6d9df;border-radius:3px;background:#fff"></div>
<svg style="left:398px;top:479.0px" width="9" height="14" viewBox="0 0 9 14"><path d="M0.8 0.8 L7.5 7 L0.8 13.2" fill="none" stroke="#6a6c70" stroke-width="1.25"/></svg>
<div class="t" style="left:441px;top:474.5px;font-size:14.3px;line-height:22px;color:#606266;font-weight:normal;">P20260420-008</div>
<div class="t" style="left:607px;top:474.5px;font-size:14.3px;line-height:22px;color:#606266;font-weight:normal;">11</div>
<div class="t" style="left:709.5px;top:474.5px;font-size:14.3px;line-height:22px;color:#606266;font-weight:normal;">2026-04-20</div>
<div class="t" style="left:1010px;top:474.5px;font-size:14.3px;line-height:22px;color:#3f93ec;font-weight:normal;">查看详情</div>
<div class="t" style="left:1119px;top:474.5px;font-size:14.3px;line-height:22px;color:#606266;font-weight:normal;">20双</div>
<div class="t" style="left:1274px;top:474.5px;font-size:14.3px;line-height:22px;color:#606266;font-weight:normal;">0双</div>
<div class="t" style="left:1383px;top:474.5px;font-size:14.3px;line-height:22px;color:#606266;font-weight:normal;">0</div>
<div class="t" style="left:1483px;top:474.5px;font-size:14.3px;line-height:22px;color:#3f93ec;font-weight:normal;">10双</div>
<div class="t" style="left:1605px;top:474.5px;font-size:14.3px;line-height:22px;color:#3f93ec;font-weight:normal;">0双</div>
<div class="t" style="left:1742px;top:474.5px;width:99px;overflow:hidden;font-size:14.3px;line-height:22px;color:#3f93ec">0双<span style="margin-left:11.5px">查看详情</span></div>
<div class="b" style="left:203.5px;top:523.5px;width:17.0px;height:17.0px;border:1.3px solid #d6d9df;border-radius:3px;background:#fff"></div>
<svg style="left:398px;top:523.0px" width="9" height="14" viewBox="0 0 9 14"><path d="M0.8 0.8 L7.5 7 L0.8 13.2" fill="none" stroke="#6a6c70" stroke-width="1.25"/></svg>
<div class="t" style="left:441px;top:518.5px;font-size:14.3px;line-height:22px;color:#606266;font-weight:normal;">P20260420-007</div>
<div class="t" style="left:607px;top:518.5px;font-size:14.3px;line-height:22px;color:#606266;font-weight:normal;">ev</div>
<div class="t" style="left:709.5px;top:518.5px;font-size:14.3px;line-height:22px;color:#606266;font-weight:normal;">2026-04-20</div>
<div class="t" style="left:1010px;top:518.5px;font-size:14.3px;line-height:22px;color:#3f93ec;font-weight:normal;">查看详情</div>
<div class="t" style="left:1119px;top:518.5px;font-size:14.3px;line-height:22px;color:#606266;font-weight:normal;">120双</div>
<div class="t" style="left:1274px;top:518.5px;font-size:14.3px;line-height:22px;color:#606266;font-weight:normal;">0双</div>
<div class="t" style="left:1383px;top:518.5px;font-size:14.3px;line-height:22px;color:#606266;font-weight:normal;">0</div>
<div class="t" style="left:1483px;top:518.5px;font-size:14.3px;line-height:22px;color:#3f93ec;font-weight:normal;">120双</div>
<div class="t" style="left:1605px;top:518.5px;font-size:14.3px;line-height:22px;color:#3f93ec;font-weight:normal;">0双</div>
<div class="t" style="left:1742px;top:518.5px;width:99px;overflow:hidden;font-size:14.3px;line-height:22px;color:#3f93ec">40双<span style="margin-left:11.5px">查看详情</span></div>
<div class="b" style="left:203.5px;top:567.5px;width:17.0px;height:17.0px;border:1.3px solid #d6d9df;border-radius:3px;background:#fff"></div>
<svg style="left:398px;top:567.0px" width="9" height="14" viewBox="0 0 9 14"><path d="M0.8 0.8 L7.5 7 L0.8 13.2" fill="none" stroke="#6a6c70" stroke-width="1.25"/></svg>
<div class="t" style="left:441px;top:562.5px;font-size:14.3px;line-height:22px;color:#606266;font-weight:normal;">P20260420-006</div>
<div class="t" style="left:607px;top:562.5px;font-size:14.3px;line-height:22px;color:#606266;font-weight:normal;">2121</div>
<div class="t" style="left:709.5px;top:562.5px;font-size:14.3px;line-height:22px;color:#606266;font-weight:normal;">2026-04-20</div>
<div class="t" style="left:1010px;top:562.5px;font-size:14.3px;line-height:22px;color:#3f93ec;font-weight:normal;">查看详情</div>
<div class="t" style="left:1119px;top:562.5px;font-size:14.3px;line-height:22px;color:#606266;font-weight:normal;">20双</div>
<div class="t" style="left:1274px;top:562.5px;font-size:14.3px;line-height:22px;color:#606266;font-weight:normal;">0双</div>
<div class="t" style="left:1383px;top:562.5px;font-size:14.3px;line-height:22px;color:#606266;font-weight:normal;">0</div>
<div class="t" style="left:1483px;top:562.5px;font-size:14.3px;line-height:22px;color:#3f93ec;font-weight:normal;">5双</div>
<div class="t" style="left:1605px;top:562.5px;font-size:14.3px;line-height:22px;color:#3f93ec;font-weight:normal;">0双</div>
<div class="t" style="left:1742px;top:562.5px;width:99px;overflow:hidden;font-size:14.3px;line-height:22px;color:#3f93ec">5双<span style="margin-left:11.5px">查看详情</span></div>
<div class="b" style="left:203.5px;top:611.5px;width:17.0px;height:17.0px;border:1.3px solid #d6d9df;border-radius:3px;background:#fff"></div>
<svg style="left:398px;top:611.0px" width="9" height="14" viewBox="0 0 9 14"><path d="M0.8 0.8 L7.5 7 L0.8 13.2" fill="none" stroke="#6a6c70" stroke-width="1.25"/></svg>
<div class="t" style="left:441px;top:606.5px;font-size:14.3px;line-height:22px;color:#606266;font-weight:normal;">P20260420-005</div>
<div class="t" style="left:607px;top:606.5px;font-size:14.3px;line-height:22px;color:#606266;font-weight:normal;">shiyan</div>
<div class="t" style="left:709.5px;top:606.5px;font-size:14.3px;line-height:22px;color:#606266;font-weight:normal;">2026-04-20</div>
<div class="t" style="left:1010px;top:606.5px;font-size:14.3px;line-height:22px;color:#3f93ec;font-weight:normal;">查看详情</div>
<div class="t" style="left:1119px;top:606.5px;font-size:14.3px;line-height:22px;color:#606266;font-weight:normal;">40双</div>
<div class="t" style="left:1274px;top:606.5px;font-size:14.3px;line-height:22px;color:#606266;font-weight:normal;">0双</div>
<div class="t" style="left:1383px;top:606.5px;font-size:14.3px;line-height:22px;color:#606266;font-weight:normal;">0</div>
<div class="t" style="left:1483px;top:606.5px;font-size:14.3px;line-height:22px;color:#3f93ec;font-weight:normal;">40双</div>
<div class="t" style="left:1605px;top:606.5px;font-size:14.3px;line-height:22px;color:#3f93ec;font-weight:normal;">0双</div>
<div class="t" style="left:1742px;top:606.5px;width:99px;overflow:hidden;font-size:14.3px;line-height:22px;color:#3f93ec">40双<span style="margin-left:11.5px">查看详情</span></div>
<div class="b" style="left:203.5px;top:655.5px;width:17.0px;height:17.0px;border:1.3px solid #d6d9df;border-radius:3px;background:#fff"></div>
<svg style="left:398px;top:655.0px" width="9" height="14" viewBox="0 0 9 14"><path d="M0.8 0.8 L7.5 7 L0.8 13.2" fill="none" stroke="#6a6c70" stroke-width="1.25"/></svg>
<div class="t" style="left:441px;top:650.5px;font-size:14.3px;line-height:22px;color:#606266;font-weight:normal;">P20260420-004</div>
<div class="t" style="left:607px;top:650.5px;font-size:14.3px;line-height:22px;color:#606266;font-weight:normal;">test</div>
<div class="t" style="left:709.5px;top:650.5px;font-size:14.3px;line-height:22px;color:#606266;font-weight:normal;">2026-04-20</div>
<div class="t" style="left:1010px;top:650.5px;font-size:14.3px;line-height:22px;color:#3f93ec;font-weight:normal;">查看详情</div>
<div class="t" style="left:1119px;top:650.5px;font-size:14.3px;line-height:22px;color:#606266;font-weight:normal;">80双</div>
<div class="t" style="left:1274px;top:650.5px;font-size:14.3px;line-height:22px;color:#606266;font-weight:normal;">0双</div>
<div class="t" style="left:1383px;top:650.5px;font-size:14.3px;line-height:22px;color:#606266;font-weight:normal;">0</div>
<div class="t" style="left:1483px;top:650.5px;font-size:14.3px;line-height:22px;color:#3f93ec;font-weight:normal;">60双</div>
<div class="t" style="left:1605px;top:650.5px;font-size:14.3px;line-height:22px;color:#3f93ec;font-weight:normal;">0双</div>
<div class="t" style="left:1742px;top:650.5px;width:99px;overflow:hidden;font-size:14.3px;line-height:22px;color:#3f93ec">0双<span style="margin-left:11.5px">查看详情</span></div>
<div class="b" style="left:203.5px;top:699.5px;width:17.0px;height:17.0px;border:1.3px solid #d6d9df;border-radius:3px;background:#fff"></div>
<svg style="left:398px;top:699.0px" width="9" height="14" viewBox="0 0 9 14"><path d="M0.8 0.8 L7.5 7 L0.8 13.2" fill="none" stroke="#6a6c70" stroke-width="1.25"/></svg>
<div class="t" style="left:441px;top:694.5px;font-size:14.3px;line-height:22px;color:#606266;font-weight:normal;">P20260420-001</div>
<div class="t" style="left:607px;top:694.5px;font-size:14.3px;line-height:22px;color:#606266;font-weight:normal;">test</div>
<div class="t" style="left:709.5px;top:694.5px;font-size:14.3px;line-height:22px;color:#606266;font-weight:normal;">2026-04-20</div>
<div class="t" style="left:1010px;top:694.5px;font-size:14.3px;line-height:22px;color:#3f93ec;font-weight:normal;">查看详情</div>
<div class="t" style="left:1119px;top:694.5px;font-size:14.3px;line-height:22px;color:#606266;font-weight:normal;">80双</div>
<div class="t" style="left:1274px;top:694.5px;font-size:14.3px;line-height:22px;color:#606266;font-weight:normal;">0双</div>
<div class="t" style="left:1383px;top:694.5px;font-size:14.3px;line-height:22px;color:#606266;font-weight:normal;">0</div>
<div class="t" style="left:1483px;top:694.5px;font-size:14.3px;line-height:22px;color:#3f93ec;font-weight:normal;">40双</div>
<div class="t" style="left:1605px;top:694.5px;font-size:14.3px;line-height:22px;color:#3f93ec;font-weight:normal;">0双</div>
<div class="t" style="left:1742px;top:694.5px;width:99px;overflow:hidden;font-size:14.3px;line-height:22px;color:#3f93ec">0双<span style="margin-left:11.5px">查看详情</span></div>
<div class="b" style="left:203.5px;top:743.5px;width:17.0px;height:17.0px;border:1.3px solid #d6d9df;border-radius:3px;background:#fff"></div>
<svg style="left:398px;top:743.0px" width="9" height="14" viewBox="0 0 9 14"><path d="M0.8 0.8 L7.5 7 L0.8 13.2" fill="none" stroke="#6a6c70" stroke-width="1.25"/></svg>
<div class="t" style="left:441px;top:738.5px;font-size:14.3px;line-height:22px;color:#606266;font-weight:normal;">P20260418-006</div>
<div class="t" style="left:607px;top:738.5px;font-size:14.3px;line-height:22px;color:#606266;font-weight:normal;">we</div>
<div class="t" style="left:709.5px;top:738.5px;font-size:14.3px;line-height:22px;color:#606266;font-weight:normal;">2026-04-18</div>
<div class="t" style="left:1010px;top:738.5px;font-size:14.3px;line-height:22px;color:#3f93ec;font-weight:normal;">查看详情</div>
<div class="t" style="left:1119px;top:738.5px;font-size:14.3px;line-height:22px;color:#606266;font-weight:normal;">40双</div>
<div class="t" style="left:1274px;top:738.5px;font-size:14.3px;line-height:22px;color:#606266;font-weight:normal;">0双</div>
<div class="t" style="left:1383px;top:738.5px;font-size:14.3px;line-height:22px;color:#606266;font-weight:normal;">0</div>
<div class="t" style="left:1483px;top:738.5px;font-size:14.3px;line-height:22px;color:#3f93ec;font-weight:normal;">40双</div>
<div class="t" style="left:1605px;top:738.5px;font-size:14.3px;line-height:22px;color:#3f93ec;font-weight:normal;">0双</div>
<div class="t" style="left:1742px;top:738.5px;width:99px;overflow:hidden;font-size:14.3px;line-height:22px;color:#3f93ec">40双<span style="margin-left:11.5px">查看详情</span></div>
<div class="b" style="left:203.5px;top:787.5px;width:17.0px;height:17.0px;border:1.3px solid #d6d9df;border-radius:3px;background:#fff"></div>
<svg style="left:398px;top:787.0px" width="9" height="14" viewBox="0 0 9 14"><path d="M0.8 0.8 L7.5 7 L0.8 13.2" fill="none" stroke="#6a6c70" stroke-width="1.25"/></svg>
<div class="t" style="left:441px;top:782.5px;font-size:14.3px;line-height:22px;color:#606266;font-weight:normal;">P20260418-005</div>
<div class="t" style="left:607px;top:782.5px;font-size:14.3px;line-height:22px;color:#606266;font-weight:normal;">扫码调试</div>
<div class="t" style="left:709.5px;top:782.5px;font-size:14.3px;line-height:22px;color:#606266;font-weight:normal;">2026-04-18</div>
<div class="t" style="left:1010px;top:782.5px;font-size:14.3px;line-height:22px;color:#3f93ec;font-weight:normal;">查看详情</div>
<div class="t" style="left:1119px;top:782.5px;font-size:14.3px;line-height:22px;color:#606266;font-weight:normal;">1360双</div>
<div class="t" style="left:1274px;top:782.5px;font-size:14.3px;line-height:22px;color:#606266;font-weight:normal;">0双</div>
<div class="t" style="left:1383px;top:782.5px;font-size:14.3px;line-height:22px;color:#606266;font-weight:normal;">0</div>
<div class="t" style="left:1483px;top:782.5px;font-size:14.3px;line-height:22px;color:#3f93ec;font-weight:normal;">1360双</div>
<div class="t" style="left:1605px;top:782.5px;font-size:14.3px;line-height:22px;color:#3f93ec;font-weight:normal;">0双</div>
<div class="t" style="left:1742px;top:782.5px;width:99px;overflow:hidden;font-size:14.3px;line-height:22px;color:#3f93ec">380双<span style="margin-left:11.5px">查看详情</span></div>
<div class="t" style="left:1119px;top:825.5px;font-size:14.3px;line-height:22px;color:#606266;font-weight:normal;">712904</div>
<div class="t" style="left:1274px;top:825.5px;font-size:14.3px;line-height:22px;color:#606266;font-weight:normal;">740</div>
<div class="t" style="left:1383px;top:825.5px;font-size:14.3px;line-height:22px;color:#606266;font-weight:normal;">4380</div>
<div class="t" style="left:1483px;top:825.5px;font-size:14.3px;line-height:22px;color:#606266;font-weight:normal;">332293</div>
<div class="t" style="left:1605px;top:825.5px;font-size:14.3px;line-height:22px;color:#606266;font-weight:normal;">770059</div>
<div class="t" style="left:1742px;top:825.5px;font-size:14.3px;line-height:22px;color:#606266;font-weight:normal;">3848</div>
<div class="t" style="left:1119px;top:869.5px;font-size:14.3px;line-height:22px;color:#606266;font-weight:normal;">712904</div>
<div class="t" style="left:1274px;top:869.5px;font-size:14.3px;line-height:22px;color:#606266;font-weight:normal;">114765</div>
<div class="t" style="left:1383px;top:869.5px;font-size:14.3px;line-height:22px;color:#606266;font-weight:normal;">4380</div>
<div class="t" style="left:1483px;top:869.5px;font-size:14.3px;line-height:22px;color:#606266;font-weight:normal;">332293</div>
<div class="t" style="left:1605px;top:869.5px;font-size:14.3px;line-height:22px;color:#606266;font-weight:normal;">770059</div>
<div class="t" style="left:1742px;top:869.5px;font-size:14.3px;line-height:22px;color:#606266;font-weight:normal;">3848</div>
<div class="t" style="left:183px;top:944.5px;font-size:14.3px;line-height:22px;color:#606266;font-weight:normal;">共 209 条</div>
<div class="b" style="left:260px;top:940px;width:110px;height:32px;border:1px solid #dcdde1;border-radius:3px;background:#fff"></div>
<div class="t" style="left:280px;top:944.5px;font-size:14.3px;line-height:22px;color:#606266;font-weight:normal;">20条/页</div>
<svg style="left:398px;top:948px" width="8" height="14" viewBox="0 0 8 14"><path d="M7 1 L1 7 L7 13" fill="none" stroke="#c0c4cc" stroke-width="1.5"/></svg>
<div class="t" style="left:441.0px;top:944.5px;font-size:14.3px;line-height:22px;color:#409eff;font-weight:bold;">1</div>
<div class="t" style="left:480.2px;top:944.5px;font-size:14.3px;line-height:22px;color:#303133;font-weight:bold;">2</div>
<div class="t" style="left:519.4px;top:944.5px;font-size:14.3px;line-height:22px;color:#303133;font-weight:bold;">3</div>
<div class="t" style="left:558.6px;top:944.5px;font-size:14.3px;line-height:22px;color:#303133;font-weight:bold;">4</div>
<div class="t" style="left:597.8px;top:944.5px;font-size:14.3px;line-height:22px;color:#303133;font-weight:bold;">5</div>
<div class="t" style="left:637.0px;top:944.5px;font-size:14.3px;line-height:22px;color:#303133;font-weight:bold;">6</div>
<div class="t" style="left:676.2px;top:944.5px;font-size:14.3px;line-height:22px;color:#303133;font-weight:bold;">7</div>
<svg style="left:718px;top:948px" width="8" height="14" viewBox="0 0 8 14"><path d="M1 1 L7 7 L1 13" fill="none" stroke="#303133" stroke-width="1.5"/></svg>
<div class="t" style="left:763px;top:944.5px;font-size:14.3px;line-height:22px;color:#606266;font-weight:normal;">前往</div>
<div class="b" style="left:797px;top:940px;width:50px;height:32px;border:1px solid #dcdde1;border-radius:3px;background:#fff"></div>
<div class="t" style="left:818px;top:944.5px;font-size:14.3px;line-height:22px;color:#606266;font-weight:normal;">1</div>
<div class="t" style="left:852px;top:944.5px;font-size:14.3px;line-height:22px;color:#606266;font-weight:normal;">页</div>
<div class="b" style="left:212px;top:336px;width:145px;height:607px;background:#fff;border-radius:4px;box-shadow:0 2px 12px rgba(0,0,0,0.12)"></div>
<svg style="left:320px;top:331.5px" width="12" height="6" viewBox="0 0 12 6"><path d="M0 6 L6 0 L12 6 Z" fill="#fff"/></svg>
<div class="t" style="left:231.5px;top:347.5px;font-size:15.4px;line-height:24px;color:#606266;font-weight:normal;">复制</div>
<div class="t" style="left:231.5px;top:380.5px;font-size:15.4px;line-height:24px;color:#606266;font-weight:normal;">生成库存码</div>
<div class="t" style="left:231.5px;top:413.5px;font-size:15.4px;line-height:24px;color:#606266;font-weight:normal;">生成入库</div>
<div class="t" style="left:231.5px;top:446.5px;font-size:15.4px;line-height:24px;color:#606266;font-weight:normal;">生成计件码</div>
<div class="t" style="left:231.5px;top:479.5px;font-size:15.4px;line-height:24px;color:#606266;font-weight:normal;">生成机位计件码</div>
<div class="t" style="left:231.5px;top:512.5px;font-size:15.4px;line-height:24px;color:#606266;font-weight:normal;">生成生产整版码</div>
<div class="t" style="left:231.5px;top:545.5px;font-size:15.4px;line-height:24px;color:#606266;font-weight:normal;">生成采购单</div>
<div class="t" style="left:231.5px;top:578.5px;font-size:15.4px;line-height:24px;color:#606266;font-weight:normal;">材料入库</div>
<div class="t" style="left:231.5px;top:611.5px;font-size:15.4px;line-height:24px;color:#606266;font-weight:normal;">领料出库</div>
<div class="b" style="left:212px;top:640.0px;width:145px;height:33.0px;background:#ecf5ff"></div>
<div class="t" style="left:231.5px;top:644.5px;font-size:15.4px;line-height:24px;color:#55a5f5;font-weight:normal;">生成成品单副件</div>
<div class="t" style="left:231.5px;top:677.5px;font-size:15.4px;line-height:24px;color:#606266;font-weight:normal;">SOP设置</div>
<div class="t" style="left:231.5px;top:710.5px;font-size:15.4px;line-height:24px;color:#606266;font-weight:normal;">导出详情</div>
<div class="t" style="left:231.5px;top:743.5px;font-size:15.4px;line-height:24px;color:#606266;font-weight:normal;">bom打印</div>
<div class="t" style="left:231.5px;top:776.5px;font-size:15.4px;line-height:24px;color:#606266;font-weight:normal;">入库单打印</div>
<div class="t" style="left:231.5px;top:809.5px;font-size:15.4px;line-height:24px;color:#606266;font-weight:normal;">上传图片</div>
<div class="t" style="left:231.5px;top:842.5px;font-size:15.4px;line-height:24px;color:#606266;font-weight:normal;">混装格式导出</div>
<div class="t" style="left:231.5px;top:875.5px;font-size:15.4px;line-height:24px;color:#606266;font-weight:normal;">计划单看板</div>
<div class="t" style="left:231.5px;top:908.5px;font-size:15.4px;line-height:24px;color:#606266;font-weight:normal;">删除</div>
<svg style="left:0;top:0" width="10" height="10" viewBox="0 0 10 10"><path d="M0 0 H7 A7 7 0 0 0 0 7 Z" fill="#fff"/></svg>
<svg style="left:1900px;top:944px" width="12" height="12" viewBox="0 0 12 12"><path d="M12 12 H5 A7 7 0 0 0 12 5 Z" fill="#e8e8e8"/></svg>
<svg style="left:0;top:0" width="1912" height="956" viewBox="0 0 1912 956">
<rect x="401.4" y="45.9" width="131.2" height="51.2" rx="1.2" ry="1.2" fill="none" stroke="#f04c4c" stroke-width="3.8"/>
<rect x="-0.10000000000000009" y="497.9" width="129.2" height="38.2" rx="1.2" ry="1.2" fill="none" stroke="#f04c4c" stroke-width="3.8"/>
<rect x="168.9" y="543.9" width="1683.2" height="52.2" rx="1.2" ry="1.2" fill="none" stroke="#f04c4c" stroke-width="3.8"/>
<rect x="209.9" y="634.9" width="151.2" height="47.2" rx="1.2" ry="1.2" fill="none" stroke="#f04c4c" stroke-width="3.8"/>
<polygon points="48.55,472.15 411.19,116.76 415.41,121.01 426.10,96.30 401.32,106.83 405.55,111.08 47.85,471.45" fill="#f04c4c"/>
<polygon points="501.52,106.15 341.75,601.28 336.22,599.53 337.90,626.80 354.91,605.43 349.38,603.68 502.48,106.45" fill="#f04c4c"/>
</svg>
</body></html>
